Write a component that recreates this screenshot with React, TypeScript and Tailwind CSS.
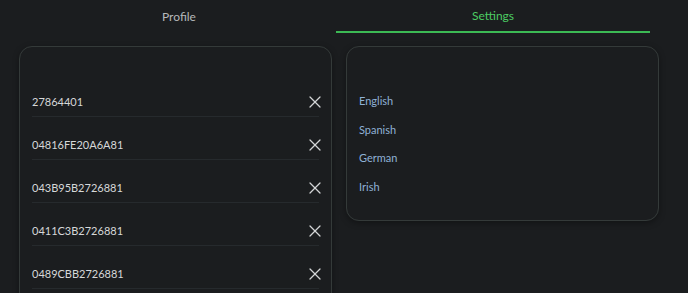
import { X } from "lucide-react";

const tags = ["27864401", "04816FE20A6A81", "043B95B2726881", "0411C3B2726881", "0489CBB2726881"];
const languages = ["English", "Spanish", "German", "Irish"];

export default function App() {
  return (
    <div
      className="h-[293px] w-[688px] overflow-hidden bg-[#1b1d1f]"
      style={{ fontFamily: "Lato, 'Noto Sans', sans-serif" }}
    >
      <div className="ml-[22px] grid w-[628px] grid-cols-2">
        <button className="h-[33px] pt-[1px] text-[12px] text-[#b5b8ba]">Profile</button>
        <button className="h-[33px] border-b-2 border-[#3cb954] pt-[1px] text-[12px] text-[#4ccc63]">
          Settings
        </button>
      </div>

      <div className="mt-[13px] flex items-start gap-[14px] pl-[19px]">
        <div className="w-[313px] rounded-[13px] border border-[#343a39] px-[12px] pb-[24px] pt-[27px] shadow-[0_2px_6px_rgba(0,0,0,0.35)]">
          {tags.map((t) => (
            <div
              key={t}
              className="flex items-center justify-between border-b border-[#262a2d] pb-[6px] pt-[20px] leading-[16px]"
            >
              <span className="text-[11px] text-[#d6d8d9]">{t}</span>
              <X className="-my-[2px] mr-[-6px] size-[20px] text-[#d3d5d6]" strokeWidth={1.5} />
            </div>
          ))}
        </div>

        <div className="h-[175px] w-[313px] rounded-[13px] border border-[#343a39] px-[12px] pt-[46px] shadow-[0_2px_6px_rgba(0,0,0,0.35)]">
          {languages.map((l) => (
            <div key={l} className="h-[28.5px] text-[11px] leading-[16px] text-[#8fb1d6]">
              {l}
            </div>
          ))}
        </div>
      </div>
    </div>
  );
}
